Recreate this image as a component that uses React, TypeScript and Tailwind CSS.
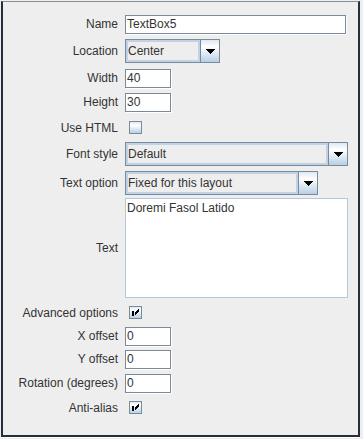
import type { ReactNode } from 'react';

const grad = 'bg-[linear-gradient(180deg,#dde8f3_0%,#ffffff_30%,#b8cfe5_100%)]';

function Arrow() {
  return (
    <svg width="9" height="5" viewBox="0 0 9 5" shapeRendering="crispEdges">
      <rect x="0" y="0" width="9" height="1" fill="#000" />
      <rect x="1" y="1" width="7" height="1" fill="#000" />
      <rect x="2" y="2" width="5" height="1" fill="#000" />
      <rect x="3" y="3" width="3" height="1" fill="#000" />
      <rect x="4" y="4" width="1" height="1" fill="#000" />
    </svg>
  );
}

function Check() {
  return (
    <svg width="13" height="13" viewBox="0 0 13 13" shapeRendering="crispEdges" className="absolute left-0 top-0">
      <rect x="3" y="5" width="2" height="5" fill="#000" />
      <path d="M9.5 3.5 L5.5 7.5 M9.5 4.5 L5.5 8.5 M9.5 5.5 L5.5 9.5" stroke="#000" strokeWidth="1" fill="none" />
    </svg>
  );
}

function Row({ label, h, mt, children }: { label: string; h: string; mt: string; children: ReactNode }) {
  return (
    <div className={`flex items-center ${h} ${mt}`}>
      <div className="w-[115px] text-right whitespace-nowrap">{label}</div>
      <div className="ml-[7px] flex items-center">{children}</div>
    </div>
  );
}

function Field({ value, w }: { value: string; w: string }) {
  return (
    <div className={`${w} h-[19px] border border-[#7a8a99] bg-white shadow-[1px_1px_0_#ffffff] pl-[1px] flex items-center leading-none`}>
      {value}
    </div>
  );
}

function Combo({ value, w }: { value: string; w: string }) {
  return (
    <div className={`${w} h-[24px] border border-[#7a8a99] flex`}>
      <div className="flex-1 bg-[#eeeeee] shadow-[inset_0_0_0_2px_#c0d3e6] pl-[2px] flex items-center">{value}</div>
      <div className={`w-[19px] border-l border-[#7a8a99] flex items-center justify-center ${grad}`}>
        <Arrow />
      </div>
    </div>
  );
}

function CheckBox({ checked }: { checked?: boolean }) {
  return (
    <div className={`relative ml-[4px] w-[13px] h-[13px] border border-[#7a8a99] ${grad}`}>
      {checked && (
        <div className="absolute -left-px -top-px">
          <Check />
        </div>
      )}
    </div>
  );
}

export default function App() {
  return (
    <div className="w-[363px] h-[439px] bg-[#eeeeee] pt-px pl-px font-['Liberation_Sans',Arial,sans-serif] text-[12px] text-[#333333]">
      <div className="w-[359px] h-[436px] border-t border-t-[#8a9097] border-x-2 border-b-2 border-x-[#26303a] border-b-[#26303a] shadow-[0_1px_0_#ffffff] flex flex-col">
        <Row label="Name" h="h-[20px]" mt="mt-[12px]">
          <Field value="TextBox5" w="w-[221px]" />
        </Row>
        <Row label="Location" h="h-[24px]" mt="mt-[5px]">
          <Combo value="Center" w="w-[95px]" />
        </Row>
        <Row label="Width" h="h-[20px]" mt="mt-[5px]">
          <Field value="40" w="w-[46px]" />
        </Row>
        <Row label="Height" h="h-[20px]" mt="mt-[4px]">
          <Field value="30" w="w-[46px]" />
        </Row>
        <Row label="Use HTML" h="h-[21px]" mt="mt-[5px]">
          <CheckBox />
        </Row>
        <Row label="Font style" h="h-[24px]" mt="mt-[4px]">
          <Combo value="Default" w="w-[223px]" />
        </Row>
        <Row label="Text option" h="h-[24px]" mt="mt-[5px]">
          <Combo value="Fixed for this layout" w="w-[193px]" />
        </Row>
        <Row label="Text" h="h-[100px]" mt="mt-[3px]">
          <div className="w-[223px] h-[100px] border border-[#b4c8dc] bg-white pl-[1px] pt-[2px] leading-[15px]">
            Doremi Fasol Latido
          </div>
        </Row>
        <Row label="Advanced options" h="h-[21px]" mt="mt-[4px]">
          <CheckBox checked />
        </Row>
        <Row label="X offset" h="h-[20px]" mt="mt-[3px]">
          <Field value="0" w="w-[46px]" />
        </Row>
        <Row label="Y offset" h="h-[20px]" mt="mt-[3px]">
          <Field value="0" w="w-[46px]" />
        </Row>
        <Row label="Rotation (degrees)" h="h-[20px]" mt="mt-[4px]">
          <Field value="0" w="w-[46px]" />
        </Row>
        <Row label="Anti-alias" h="h-[21px]" mt="mt-[4px]">
          <CheckBox checked />
        </Row>
      </div>
    </div>
  );
}
